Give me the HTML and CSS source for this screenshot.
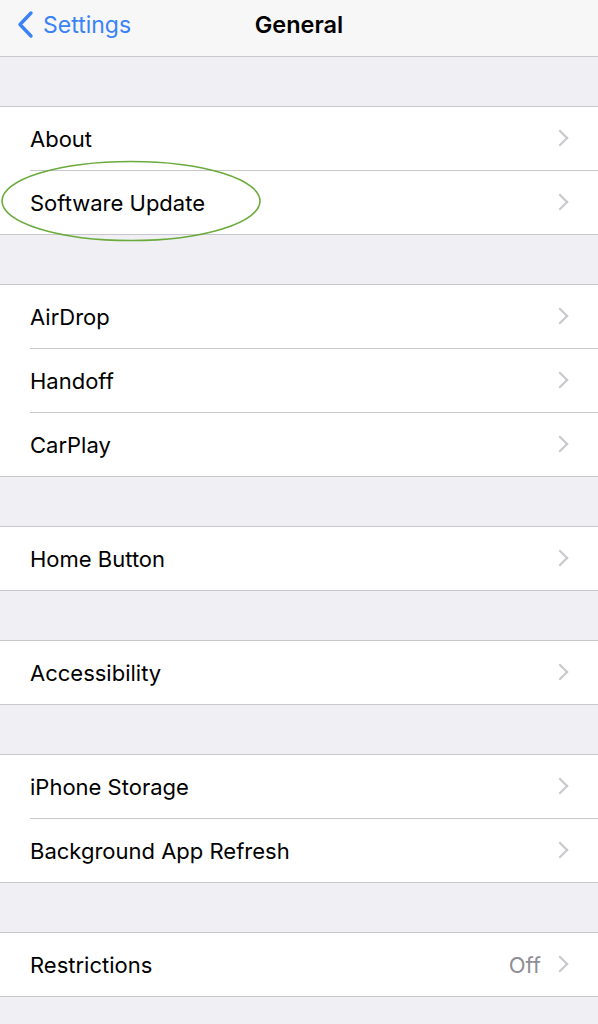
FILE: index.html
```html
<!DOCTYPE html>
<html>
<head>
<meta charset="utf-8">
<link rel="stylesheet" href="styles.css">
</head>
<body>
<header class="nav">
  <a class="back">
    <svg class="back-icon" width="20" height="30" viewBox="0 0 20 30"><path d="M15 3 L4 14.5 L15 26" fill="none" stroke="#3a82f7" stroke-width="3.4" stroke-linecap="round" stroke-linejoin="round"/></svg>
    <span>Settings</span>
  </a>
  <h1 class="title">General</h1>
</header>
<main class="content">
  <section class="group">
    <div class="row"><span class="label">About</span><span class="chev"></span></div>
    <div class="row highlight"><span class="label">Software Update</span><span class="chev"></span>
      <svg class="ellipse" width="264" height="84" viewBox="0 0 264 84"><ellipse cx="132" cy="42" rx="129" ry="39.5" fill="none" stroke="#6aab3c" stroke-width="1.6"/></svg>
    </div>
  </section>
  <section class="group">
    <div class="row"><span class="label">AirDrop</span><span class="chev"></span></div>
    <div class="row"><span class="label">Handoff</span><span class="chev"></span></div>
    <div class="row"><span class="label">CarPlay</span><span class="chev"></span></div>
  </section>
  <section class="group">
    <div class="row"><span class="label">Home Button</span><span class="chev"></span></div>
  </section>
  <section class="group">
    <div class="row"><span class="label">Accessibility</span><span class="chev"></span></div>
  </section>
  <section class="group">
    <div class="row"><span class="label">iPhone Storage</span><span class="chev"></span></div>
    <div class="row"><span class="label">Background App Refresh</span><span class="chev"></span></div>
  </section>
  <section class="group">
    <div class="row"><span class="label">Restrictions</span><span class="value">Off</span><span class="chev"></span></div>
  </section>
</main>
</body>
</html>
```
FILE: styles.css
```css
html, body {
  margin: 0;
  padding: 0;
}
body {
  width: 598px;
  height: 1024px;
  overflow: hidden;
  background: #efeff4;
  font-family: Inter, "Liberation Sans", Arial, sans-serif;
  color: #000;
}
.nav {
  height: 56px;
  background: #f7f7f7;
  border-bottom: 1px solid #c8c7cc;
  display: flex;
  align-items: center;
  justify-content: center;
  position: relative;
}
.back {
  position: absolute;
  left: 16px;
  top: 10px;
  display: flex;
  align-items: center;
  gap: 7px;
  color: #3a82f7;
  font-size: 23px;
}
.back-icon {
  display: block;
}
.title {
  margin: 0;
  font-size: 23.5px;
  font-weight: 600;
  margin-top: -8px;
}
.content {
  display: flex;
  flex-direction: column;
  padding-top: 49px;
  gap: 49px;
}
.group {
  background: #fff;
  border-top: 1px solid #c8c7cc;
  border-bottom: 1px solid #c8c7cc;
}
.row {
  height: 63px;
  display: flex;
  align-items: center;
  padding: 1px 30px 0 30px;
  box-sizing: border-box;
  position: relative;
}
.row + .row::before {
  content: "";
  position: absolute;
  top: -1px;
  left: 30px;
  right: 0;
  height: 1px;
  background: #c8c7cc;
}
.row + .row {
  margin-top: 1px;
}
.label {
  flex: 1;
  font-size: 22px;
}
.value {
  font-size: 22px;
  color: #8e8e93;
  margin-right: 13px;
}
.chev {
  width: 10px;
  height: 10px;
  border-top: 2.2px solid #c7c7cc;
  border-right: 2.2px solid #c7c7cc;
  transform: rotate(45deg);
  margin-right: 2px;
  margin-top: -2px;
}
.ellipse {
  position: absolute;
  left: -1px;
  top: -12px;
  pointer-events: none;
}
```
